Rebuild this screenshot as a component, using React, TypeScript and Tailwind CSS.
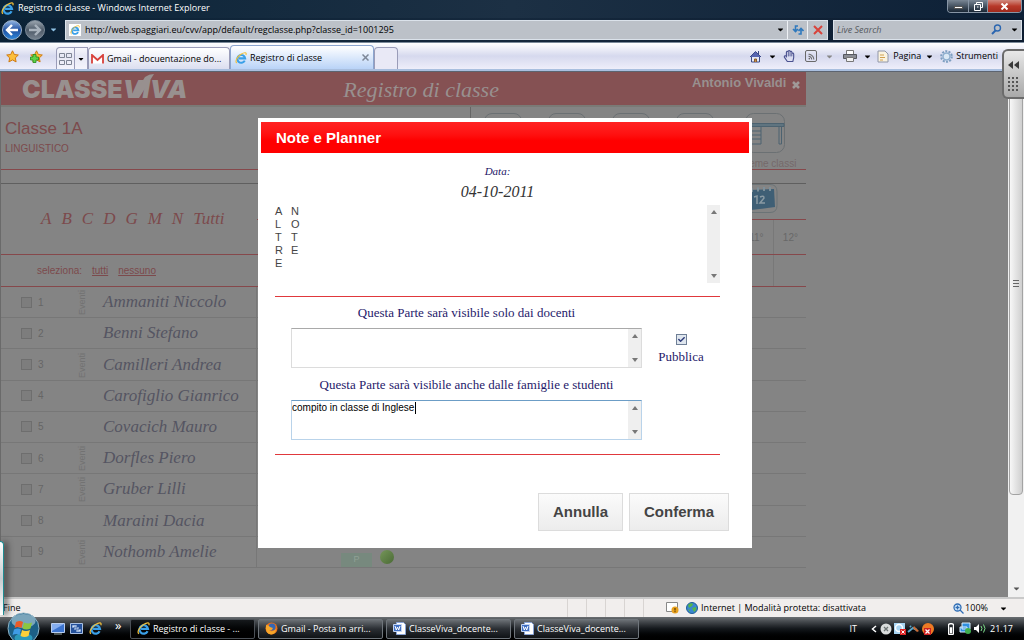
import React from 'react'
import { FaCaretDown, FaRegHandPaper, FaCheck, FaBatteryThreeQuarters } from 'react-icons/fa'
import { MdRssFeed } from 'react-icons/md'

const STUDENTS = [
  { name: 'Ammaniti Niccolo', events: true },
  { name: 'Benni Stefano', events: false },
  { name: 'Camilleri Andrea', events: true },
  { name: 'Carofiglio Gianrico', events: false },
  { name: 'Covacich Mauro', events: false },
  { name: 'Dorfles Piero', events: true },
  { name: 'Gruber Lilli', events: true },
  { name: 'Maraini Dacia', events: false },
  { name: 'Nothomb Amelie', events: true },
]

const LETTERS = ['A', 'B', 'C', 'D', 'G', 'M', 'N', 'Tutti']

const TASKS = [
  { label: 'Registro di classe - ...', icon: <IeIcon size={13} />, active: true },
  { label: 'Gmail - Posta in arri...', icon: <FirefoxIcon />, active: false },
  { label: 'ClasseViva_docente...', icon: <WordIcon />, active: false },
  { label: 'ClasseViva_docente...', icon: <WordIcon />, active: false },
]

function App() {
  return (
    <div className="relative flex h-screen flex-col overflow-hidden bg-[#848484] font-['Segoe_UI','Open_Sans',sans-serif] text-[9px]">
      <TitleBar />
      <AddressBar />
      <TabBar />
      <div className="flex min-h-0 flex-1 border-t border-[#5d6470]">
        <div className="relative min-w-0 flex-1 overflow-hidden">
          <Register />
          <div className="absolute inset-0 flex items-start justify-center pl-0.5 pt-[46px]">
            <NoteDialog />
          </div>
        </div>
        <PageScrollbar />
      </div>
      <StatusBar />
      <Taskbar />
      <SidePanels />
    </div>
  )
}

/* ---------- browser ---------- */

function TitleBar() {
  return (
    <div className="flex h-[18px] shrink-0 items-start justify-between bg-linear-to-r from-[#0b2438] via-[#1c3044] to-[#0d2036] pl-px pr-0.5">
      <div className="flex items-center gap-1 pt-px text-white">
        <IeIcon size={13} />
        <span className="text-[9px] leading-[14px]">Registro di classe - Windows Internet Explorer</span>
      </div>
      <div className="flex h-[13px] overflow-hidden rounded-b border border-t-0 border-[#8795a5] text-white">
        <button aria-label="Riduci a icona" className="flex w-[21px] items-end justify-center border-r border-[#8795a5] bg-linear-to-b from-[#7a8795] to-[#1a2735] pb-[3px]">
          <span className="h-[3px] w-[9px] border border-[#555] bg-white" />
        </button>
        <button aria-label="Ripristina" className="flex w-[19px] items-center justify-center border-r border-[#8795a5] bg-linear-to-b from-[#7a8795] to-[#1a2735]">
          <svg width="9" height="9" viewBox="0 0 9 9" fill="none" stroke="white">
            <path d="M2.500 2.500V.5h6v5h-2M.5 2.500h6v6h-6zM3 5h1.500" />
          </svg>
        </button>
        <button aria-label="Chiudi" className="flex w-[33px] items-center justify-center bg-linear-to-b from-[#d08a80] via-[#b8392a] to-[#a02a1c]">
          <svg width="9" height="7" viewBox="0 0 9 7" stroke="white" strokeWidth="2">
            <path d="M1.500.5l6 6M7.500.5l-6 6" />
          </svg>
        </button>
      </div>
    </div>
  )
}

function AddressBar() {
  return (
    <div className="flex h-[25px] shrink-0 items-center border-b border-[#7b8a9a] bg-linear-to-r from-[#0b2236] via-[#15283c] to-[#0c1c30] pb-px pl-0.5 pr-0.5">
      <button aria-label="Indietro" className="flex size-[20px] items-center justify-center rounded-full border border-[#9fb4cc] bg-linear-to-b from-[#8fb2e0] via-[#1f4fa0] to-[#2e86d8]">
        <svg width="14" height="12" viewBox="0 0 14 12" fill="none" stroke="white" strokeWidth="2.400"><path d="M7 1L2 6l5 5M2 6h11" /></svg>
      </button>
      <button aria-label="Avanti" className="ml-[3px] flex size-[20px] items-center justify-center rounded-full border border-[#7d8b99] bg-linear-to-b from-[#9aa4ae] via-[#4d5a68] to-[#76828e]">
        <svg width="14" height="12" viewBox="0 0 14 12" fill="none" stroke="#a9b3bd" strokeWidth="2.400"><path d="M7 1l5 5-5 5M12 6H1" /></svg>
      </button>
      <FaCaretDown className="ml-1 size-[9px] text-[#8fc3e6]" />
      <div className="ml-[7px] flex h-[20px] flex-1 items-center border border-[#dbe2ea] bg-[#bcc1c8]">
        <span className="ml-[3px] flex size-[12px] items-center justify-center bg-white"><IeIcon size={10} /></span>
        <input aria-label="Indirizzo" defaultValue="http://web.spaggiari.eu/cvv/app/default/regclasse.php?classe_id=1001295" className="ml-1 min-w-0 flex-1 bg-transparent text-[9px] text-black outline-none" />
        <FaCaretDown className="mr-0.5 size-[9px] text-black" />
        <button aria-label="Aggiorna" className="flex h-full w-[20px] items-center justify-center border-l border-[#eef1f5]">
          <svg width="12" height="12" viewBox="0 0 12 12" fill="none" stroke="#2f79bd" strokeWidth="1.600"><path d="M6 2H3.500v5M1 5l2.500 2.500L6 5M6.500 10H9V5M6.500 7L9 4.500 11.500 7" /></svg>
        </button>
        <button aria-label="Interrompi" className="flex h-full w-[20px] items-center justify-center border-l border-[#eef1f5]">
          <svg width="10" height="10" viewBox="0 0 10 10" stroke="#d8433b" strokeWidth="2"><path d="M1 1l8 8M9 1L1 9" /></svg>
        </button>
      </div>
      <div className="ml-[5px] flex h-[20px] w-[189px] items-center border border-[#dbe2ea] bg-[#bcc1c8]">
        <input aria-label="Cerca" placeholder="Live Search" className="ml-[3px] min-w-0 flex-1 bg-transparent text-[9px] italic outline-none placeholder:text-[#55595f]" />
        <svg width="11" height="11" viewBox="0 0 11 11" fill="none" stroke="#2b66b0" strokeWidth="1.400"><circle cx="6.500" cy="4" r="3" /><path d="M4.500 6.500L1 10" strokeWidth="2" /></svg>
        <FaCaretDown className="ml-2 mr-0.5 size-[9px] text-black" />
      </div>
    </div>
  )
}

function TabBar() {
  return (
    <div className="flex h-[28px] shrink-0 items-center justify-between border-b-2 border-[#a9bfdf] bg-linear-to-b from-white via-[#d6d9ee] to-[#eeeefa] text-black">
      <div className="flex h-full items-end">
        <div className="flex h-full items-center gap-[11px] pl-[6px] pr-[13px]">
          <StarIcon />
          <StarIcon plus />
        </div>
        <div className="flex h-[22px] items-center rounded-tl border border-[#9a9cb8] border-b-0 bg-white/40">
          <button aria-label="Schede rapide" className="flex h-full w-[18px] items-center justify-center border-r border-[#9a9cb8]">
            <svg width="13" height="12" viewBox="0 0 13 12" fill="none" stroke="#7e8594"><path d="M.5.5h5v4h-5zM7.500.5h5v4h-5zM.5 7.500h5v4h-5zM7.500 7.500h5v4h-5z" /></svg>
          </button>
          <button aria-label="Elenco schede" className="flex w-[12px] justify-center"><FaCaretDown className="size-[8px]" /></button>
        </div>
        <button className="flex h-[22px] w-[142px] items-center gap-[3px] rounded-t border border-b-0 border-[#9a9cb8] bg-linear-to-b from-white to-[#dcdff0] pl-[2px]">
          <svg width="13" height="10" viewBox="0 0 13 10" fill="white" stroke="#d8403a" strokeWidth="1.800"><path d="M1 9.500V1l5.500 5L12 1v8.500" /></svg>
          <span>Gmail - docuentazione do...</span>
        </button>
        <div className="flex h-[24px] w-[144px] items-center gap-[3px] rounded-t border border-b-0 border-[#8ba5cf] bg-linear-to-b from-white to-[#b9d3f7] pl-[4px] pr-[4px]">
          <IeIcon size={12} />
          <span className="flex-1">Registro di classe</span>
          <button aria-label="Chiudi scheda">
            <svg width="7" height="7" viewBox="0 0 7 7" stroke="#7d8797" strokeWidth="1.500"><path d="M.5.5l6 6M6.500.5l-6 6" /></svg>
          </button>
        </div>
        <button aria-label="Nuova scheda" className="h-[22px] w-[24px] rounded-t border border-b-0 border-[#9a9cb8] bg-[#e9e9f6]" />
      </div>
      <div className="flex items-center pr-[26px]">
        <svg width="13" height="13" viewBox="0 0 13 13" fill="#e4e8f4" stroke="#3c4a86"><path d="M2.500 6v6h8V6" /><path d="M1 7l5.500-5.500L12 7" fill="#5564b0" /><path d="M9.500 1v3" /><path d="M5.500 12V9h2v3" fill="#c08a4a" stroke="#8a5a2a" /></svg>
        <FaCaretDown className="ml-[6px] size-[9px]" />
        <FaRegHandPaper className="ml-[6px] size-[12px] text-[#4b5290]" />
        <span className="ml-[10px] flex size-[12px] items-center justify-center rounded-xs border border-[#6a6a6a] text-[#6a6a6a]"><MdRssFeed className="size-[9px]" /></span>
        <FaCaretDown className="ml-[8px] size-[9px] text-[#888]" />
        <PrinterIcon />
        <FaCaretDown className="ml-[6px] size-[9px]" />
        <svg className="ml-[5px]" width="12" height="13" viewBox="0 0 12 13" fill="#fbf3df" stroke="#9096a8"><path d="M1 1h7l3 3v8H1z" /><path d="M3 5h4M3 7.500h5M3 10h3" stroke="#d0a050" /></svg>
        <button className="ml-[4px] flex items-center gap-[4px]">Pagina <FaCaretDown className="size-[9px]" /></button>
        <GearIcon />
        <button className="ml-[3px]">Strumenti</button>
      </div>
    </div>
  )
}

function PageScrollbar() {
  return (
    <div className="flex w-[16px] shrink-0 flex-col items-center justify-between bg-[#f1f1f1]">
      <div className="flex h-[423px] w-[14px] items-center justify-center rounded-b-sm border border-[#a3a3a3] bg-linear-to-r from-[#f7f7f7] to-[#cfcfcf]">
        <span className="h-[7px] w-[6px] border-y border-[#666]"><span className="mt-[2px] block h-px bg-[#666]" /></span>
      </div>
      <FaCaretDown className="mb-1 size-[9px] text-[#555]" />
    </div>
  )
}

function StatusBar() {
  return (
    <div className="flex h-[20px] shrink-0 items-center justify-between border-t-2 border-[#c9c9c9] bg-[#f1eeed] text-black">
      <span className="pl-[3px]">Fine</span>
      <div className="flex h-full items-center">
        {[0, 1, 2, 3, 4].map((i) => (
          <span key={i} className="mr-[18px] h-full w-px bg-[#d8d4d2]" />
        ))}
        <svg className="ml-1" width="13" height="12" viewBox="0 0 13 12"><path d="M.5.5h11v9H.5z" fill="white" stroke="#888" /><circle cx="9" cy="8" r="3.500" fill="#e9a21f" /><path d="M9 6v2.500M9 9.200v1" stroke="#3a2500" /></svg>
        <GlobeIcon />
        <span className="ml-[3px] w-[252px]">Internet | Modalità protetta: disattivata</span>
        <svg width="11" height="11" viewBox="0 0 11 11" fill="none" stroke="#2f6db5" strokeWidth="1.300"><circle cx="4.500" cy="4.500" r="3.500" fill="#d8ebfb" /><path d="M2.500 4.500h4M4.500 2.500v4M7 7l3.500 3.500" /></svg>
        <button className="ml-px flex items-center gap-[11px] pr-[16px]">100% <FaCaretDown className="size-[9px]" /></button>
      </div>
    </div>
  )
}

function Taskbar() {
  return (
    <div className="flex h-[23px] shrink-0 items-center justify-between bg-linear-to-b from-[#6a6e72] via-[#15191d] to-black pr-[11px] text-white">
      <div className="flex items-center">
        <button aria-label="Start" className="relative z-10 ml-[7px] -my-2 size-[33px]"><StartOrb /></button>
        <DesktopIcon />
        <SwitchIcon />
        <span className="ml-[6px]"><IeIcon size={13} /></span>
        <span className="ml-[13px] mb-2 w-[15px] text-[13px] leading-[10px]">»</span>
        <div className="flex gap-[3px]">
          {TASKS.map((task, i) => (
            <TaskButton key={i} task={task} />
          ))}
        </div>
      </div>
      <div className="flex items-center">
        <span className="mr-[14px]">IT</span>
        <svg width="6" height="8" viewBox="0 0 6 8" fill="none" stroke="white" strokeWidth="1.500"><path d="M5 1L1.500 4 5 7" /></svg>
        <svg className="ml-[3px]" width="56" height="14" viewBox="0 0 56 14">
          <circle cx="6" cy="7" r="5.500" fill="#d9dcdc" /><path d="M4 5l4 4M8 5L4 9" stroke="#6d7474" strokeWidth="1.300" />
          <path d="M14 1h11v11H14z" fill="#a7d4f2" /><circle cx="19" cy="6" r="3.500" fill="none" stroke="white" strokeWidth="1.500" /><path d="M20 7h6v6h-6z" fill="#d22" /><path d="M21.500 8.500l3 3M24.500 8.500l-3 3" stroke="white" />
          <path d="M28 10l5-4 4 2M30 4l1 1" stroke="#58a5c9" strokeWidth="2" /><path d="M34 4l5 5-2 1-4-4z" fill="#c76a35" />
          <circle cx="48" cy="7" r="6" fill="#ee7a24" /><path d="M44 6h7v7h-7z" fill="#cf2020" /><path d="M45.500 7.500l4 4M49.500 7.500l-4 4" stroke="white" strokeWidth="1.300" />
        </svg>
        <FaBatteryThreeQuarters className="ml-[9px] size-[12px] -rotate-90" />
        <svg className="ml-[2px]" width="28" height="13" viewBox="0 0 28 13">
          <path d="M3 1h8v6H3zM1 5h7v5H1z" fill="#2f8fe0" stroke="#dcefff" /><circle cx="9" cy="9" r="3" fill="#3fae4f" />
          <path d="M15 5h2l3-3v9l-3-3h-2z" fill="white" /><path d="M22 4q2 2.500 0 5M24.500 2.500q3 4 0 8" fill="none" stroke="#7fe08a" />
        </svg>
        <span className="ml-[3px]">21.17</span>
      </div>
    </div>
  )
}

function TaskButton({ task }: any) {
  return (
    <button className={task.active
      ? 'flex h-[20px] w-[125px] items-center gap-[3px] rounded-xs border border-[#4b5056] bg-linear-to-b from-[#16191c] to-black px-[6px]'
      : 'flex h-[20px] w-[125px] items-center gap-[3px] rounded-xs border border-[#6f757b] bg-linear-to-b from-[#6b7075] via-[#2a2e33] to-[#101316] px-[6px]'}>
      {task.icon}
      <span className="whitespace-nowrap">{task.label}</span>
    </button>
  )
}

/* Docked gadgets that sit over the window edges */
function SidePanels() {
  return (
    <>
      <div className="absolute right-0 top-[49px] flex h-[50px] w-[22px] flex-col items-center gap-[8px] rounded-l-md border-2 border-r-0 border-[#6b6b6b] bg-linear-to-b from-[#e8e8e8] to-[#a9a9a9] pt-[10px]">
        <svg width="12" height="8" viewBox="0 0 12 8" fill="#3a3a3a"><path d="M5 0v8L0 4zM11 0v8L6 4z" /></svg>
        <svg width="12" height="15" viewBox="0 0 12 15" stroke="#555" strokeWidth="2" strokeDasharray="2 2"><path d="M0 1h12M0 5h12M0 9h12M0 13h12" /></svg>
      </div>
      <div className="absolute bottom-[25px] left-0 h-[74px] w-[4px] rounded-tr border-r border-t border-[#1f8d93] bg-linear-to-b from-white via-[#c7cccf] to-white shadow-[3px_0_6px_#333]" />
    </>
  )
}

/* ---------- page ---------- */

function Register() {
  return (
    <div className="h-full w-4/5 border-l border-[#6a6a6a] font-['Arial','Liberation_Sans',sans-serif] text-[#7c4a4c]">
      <header className="flex h-[35px] items-center border-b-2 border-[#7a7a76] bg-[#855153] text-[#98908f]">
        <Logo />
        <h1 className="ml-[156px] flex-1 pt-px font-['Monotype_Corsiva','Liberation_Serif',serif] text-[22px] italic">Registro di classe</h1>
        <span className="mb-3 text-[13px] font-bold">Antonio Vivaldi</span>
        <button aria-label="Esci" className="mb-2 ml-[6px] mr-[6px]">
          <svg width="8" height="8" viewBox="0 0 8 8" stroke="#a09a99" strokeWidth="2.500"><path d="M1 1l6 6M7 1L1 7" /></svg>
        </button>
      </header>

      <div className="flex h-[63px] items-stretch justify-between border-b border-[#86484b]">
        <div className="pl-[4px] pt-[12px]">
          <h2 className="text-[17px] leading-[20px]">Classe 1A</h2>
          <p className="pt-[2px] text-[10px] leading-[16px]">LINGUISTICO</p>
        </div>
        <div className="flex items-start gap-[20px] border-l border-[#666] pl-[13px] pr-[10px] pt-[6px]">
          <div className="flex gap-[26px]">
            {[0, 1, 2, 3].map((i) => (
              <span key={i} className="size-[38px] rounded-lg border border-[#6b7073]" />
            ))}
          </div>
          <div className="flex flex-col items-center">
            <DeskIcon />
            <span className="mt-[3px] text-[10px] text-[#75696a]">Insieme classi</span>
          </div>
        </div>
      </div>

      <div className="mt-[13px] flex h-[72px] border-y border-t-[#5f5f5f] border-b-[#86484b]">
        <nav className="flex w-[256px] items-center gap-[10px] pl-[40px] font-['Monotype_Corsiva','Liberation_Serif',serif] text-[17px] italic">
          {LETTERS.map((letter) => (
            <a key={letter} href="#">{letter}</a>
          ))}
        </nav>
        <div className="flex flex-1 flex-col">
          <div className="flex h-[36px] justify-end border-b border-[#86484b] pr-[28px]"><CalendarIcon /></div>
          <div className="flex flex-1 items-center justify-end text-[10px] text-[#686868]">
            <span className="w-[34px] text-center">11°</span>
            <span className="flex h-full w-[33px] items-center justify-center border-l border-[#787878]">12°</span>
          </div>
        </div>
      </div>

      <div className="flex h-[32px] items-center justify-between border-b border-[#86484b]">
        <div className="flex gap-[10px] pl-[36px] text-[10px]">
          <span>seleziona:</span>
          <a href="#" className="underline">tutti</a>
          <a href="#" className="underline">nessuno</a>
        </div>
        <span className="mr-[32px] h-full w-px bg-[#787878]" />
      </div>

      <table className="h-[281px] w-full border-separate border-spacing-0 text-[#666]">
        <tbody>
          {STUDENTS.map((student, i) => (
            <StudentRow key={student.name} student={student} index={i + 1} />
          ))}
        </tbody>
      </table>
    </div>
  )
}

function StudentRow({ student, index }: any) {
  return (
    <tr className="h-[31px]">
      <td className="w-[74px] border-b border-[#777] p-0 pl-[20px]">
        <label className="flex items-center gap-[6px] text-[10px]">
          <input type="checkbox" className="size-[11px] appearance-none border border-[#6e6e6e] bg-[#7d7d7d]" />
          {index}
        </label>
      </td>
      <td className="w-[28px] border-b border-[#777] p-0">
        {student.events && <span className="block h-[26px] rotate-180 text-[9px] leading-[14px] text-[#727272] [writing-mode:vertical-rl]">Eventi</span>}
      </td>
      <td className="w-[154px] whitespace-nowrap border-b border-r border-[#777] p-0 font-['Monotype_Corsiva','Liberation_Serif',serif] text-[17px] leading-[20px] italic text-[#555562]">{student.name}</td>
      <td className="border-b border-[#777] p-0 align-bottom">
        {index === 9 && (
          <div className="flex items-end gap-[8px] pl-[84px]">
            <span className="flex h-[14px] w-[31px] items-center justify-center bg-[#77897e] text-[9px] text-[#8fa095]">P</span>
            <span className="mb-[3px] size-[14px] rounded-full bg-linear-to-br from-[#76965a] to-[#4a6b35]" />
          </div>
        )}
      </td>
    </tr>
  )
}

function Logo() {
  return (
    <div className="relative ml-[21px] font-['Inter',sans-serif] text-[25px] font-black leading-[38px]">
      CLASSE<span className="italic">VIVA</span>
      <svg className="absolute left-[104px] top-[4px]" width="30" height="25" viewBox="0 0 30 25" fill="#98908f"><path d="M6 24L19 3q4-3 9-3L13 24z" /></svg>
    </div>
  )
}

/* ---------- dialog ---------- */

function NoteDialog() {
  return (
    <div role="dialog" aria-labelledby="dialog-title" className="w-[494px] bg-white px-[3px] pb-[17px] pt-[4px] font-['Arial','Liberation_Sans',sans-serif]">
      <h2 id="dialog-title" className="h-[31px] bg-linear-to-b from-[#ff2222] to-[#ff0000] to-60% pl-[15px] text-[15px] font-bold leading-[32px] text-white">Note e Planner</h2>
      <form className="pl-[14px] pr-[29px] pt-[10px]">
        <div className="flex flex-col items-center font-['Monotype_Corsiva','Liberation_Serif',serif] italic">
          <p className="text-[11px] leading-[16px] text-[#1a1466]">Data:</p>
          <p className="pt-[3px] text-[16px] leading-[20px] text-[#333]">04-10-2011</p>
        </div>

        <div className="mt-[3px] flex h-[78px] justify-between text-[11px] leading-[13px] text-[#444]">
          <div className="flex gap-[8px]">
            <VerticalWord word="ALTRE" />
            <VerticalWord word="NOTE" />
          </div>
          <Scroller />
        </div>

        <div className="mt-[13px] flex border-y border-[#e0383c] pb-[14px] pl-[16px] pt-[6px] font-['Book_Antiqua','Liberation_Serif',serif] text-[13px] leading-[20px] text-[#1f1a6b]">
          <div className="flex-1">
            <label htmlFor="teachers" className="block text-center">Questa Parte sarà visibile solo dai docenti</label>
            <div className="mt-[5px] flex h-[40px] border border-[#dcdcdc] border-t-[#a9a9a9]">
              <textarea id="teachers" className="min-w-0 flex-1 resize-none outline-none" />
              <Scroller />
            </div>
            <label htmlFor="families" className="mt-[7px] block text-center">Questa Parte sarà visibile anche dalle famiglie e studenti</label>
            <div className="relative mt-[5px] flex h-[40px] border border-[#b9d3ea] border-t-[#6c9dc6]">
              <textarea id="families" defaultValue="compito in classe di Inglese" className="min-w-0 flex-1 resize-none font-['Arial','Liberation_Sans',sans-serif] text-[10px] leading-[14px] text-black outline-none" />
              <span className="absolute left-[123px] top-px h-[12px] w-px bg-black" />
              <Scroller />
            </div>
          </div>
          <label className="flex w-[78px] flex-col items-center pt-[31px]">
            <span className="relative flex size-[11px]">
              <input type="checkbox" defaultChecked className="size-full appearance-none border border-[#6f7f96] bg-[#dfe6ee]" />
              <FaCheck className="absolute left-[2px] top-[2px] size-[7px] text-[#2c3a78]" />
            </span>
            <span className="pt-[2px]">Pubblica</span>
          </label>
        </div>

        <div className="-mr-[9px] mt-[38px] flex justify-end gap-[6px] text-[15px] font-bold text-[#444]">
          <button type="button" className="h-[38px] border border-[#dcdcdc] bg-linear-to-b from-[#fbfbfb] to-[#ececec] px-[14px]">Annulla</button>
          <button type="button" className="h-[38px] border border-[#dcdcdc] bg-linear-to-b from-[#fbfbfb] to-[#ececec] px-[14px]">Conferma</button>
        </div>
      </form>
    </div>
  )
}

function VerticalWord({ word }: any) {
  return (
    <div className="flex w-[8px] flex-col">
      {word.split('').map((letter: string, i: number) => (
        <span key={i}>{letter}</span>
      ))}
    </div>
  )
}

function Scroller() {
  return (
    <div className="flex w-[13px] flex-col items-center justify-between bg-[#efefef] py-[5px]">
      <svg width="6" height="4" viewBox="0 0 6 4" fill="#777"><path d="M3 0l3 4H0z" /></svg>
      <svg width="6" height="4" viewBox="0 0 6 4" fill="#777"><path d="M0 0h6L3 4z" /></svg>
    </div>
  )
}

/* ---------- icons ---------- */

function IeIcon({ size }: any) {
  return (
    <svg width={size} height={size} viewBox="0 0 16 16" fill="none" className="shrink-0">
      <path d="M13 11.500A5.200 5.200 0 1 1 13.500 8.500H5" stroke="#3aa0e8" strokeWidth="2.800" />
      <path d="M2.500 14.500C-.5 13 3 6 8 3s8-2.500 6.500 1" stroke="#f3c13a" strokeWidth="1.500" />
    </svg>
  )
}

function StarIcon({ plus }: any) {
  return (
    <svg width="13" height="13" viewBox="0 0 13 13">
      <path d="M6.500.8l1.800 3.700 4 .5-3 2.900.8 4-3.600-2-3.600 2 .8-4-3-2.900 4-.5z" fill="#fcbf3b" stroke="#d07a12" />
      {plus && <path d="M3 4.500h3v2.500h2.500v3H6v2.500H3V10H.5V7H3z" fill="#5fd34a" stroke="#238a1c" strokeWidth=".8" />}
    </svg>
  )
}

function PrinterIcon() {
  return (
    <svg className="ml-[9px]" width="14" height="12" viewBox="0 0 14 12">
      <path d="M3.500.5h7v4h-7z" fill="white" stroke="#777" />
      <path d="M.5 4.500h13v4H.5z" fill="#8a8d94" stroke="#55585f" />
      <path d="M3.500 7.500h7v4h-7z" fill="#f2f2f2" stroke="#777" />
    </svg>
  )
}

function GearIcon() {
  return (
    <svg className="ml-[6px]" width="13" height="13" viewBox="0 0 13 13" fill="none">
      <circle cx="6.500" cy="6.500" r="5.300" stroke="#7d9ec0" strokeWidth="2" strokeDasharray="2 1.300" />
      <circle cx="6.500" cy="6.500" r="3.500" fill="#dbe9f5" stroke="#8fb0cf" strokeWidth="1.500" />
    </svg>
  )
}

function GlobeIcon() {
  return (
    <svg className="ml-[7px]" width="12" height="12" viewBox="0 0 12 12">
      <circle cx="6" cy="6" r="5.500" fill="#3a86d0" stroke="#1f5d96" />
      <path d="M2 3q3-3 5-1l-1 2-3 2zM6 6l4-1q1 3-2 5zM2 7l2 1v2z" fill="#55b54a" />
    </svg>
  )
}

function StartOrb() {
  return (
    <svg width="33" height="33" viewBox="0 0 33 33">
      <circle cx="16.500" cy="16.500" r="15.500" fill="#1c5f86" stroke="#8fb4c6" />
      <ellipse cx="16.500" cy="9" rx="12" ry="7" fill="#b9d3df" opacity=".6" />
      <ellipse cx="16.500" cy="26" rx="9" ry="5" fill="#36c0dd" opacity=".6" />
      <path d="M9 10q4-2 7 0l-1.500 6q-3-2-7 0z" fill="#ea5b28" />
      <path d="M17 10.500q4 2 8 0l-1.500 6q-4 2-8 0z" fill="#8cc63e" />
      <path d="M7 17.500q4-2 7 0L12.500 23q-3-2-7 0z" fill="#3f9be6" />
      <path d="M15 18q4 2 8 0l-1.500 6q-4 2-8 0z" fill="#fbd039" />
    </svg>
  )
}

function DesktopIcon() {
  return (
    <svg className="ml-[11px]" width="14" height="12" viewBox="0 0 14 12">
      <path d="M.5.5h13v9H.5z" fill="#3c74cf" stroke="#b9cdee" /><path d="M1 1h12L1 8z" fill="#86aef0" /><path d="M3 11h8" stroke="#9aa" />
    </svg>
  )
}

function SwitchIcon() {
  return (
    <svg className="ml-[5px]" width="13" height="12" viewBox="0 0 13 12">
      <path d="M.5.5h12v10H.5z" fill="#25529c" stroke="#a9c0e2" /><path d="M2 2h5v3H2zM4 4h5v3H4zM6 6h5v3H6z" fill="#cfe1fa" stroke="#25529c" strokeWidth=".6" />
    </svg>
  )
}

function FirefoxIcon() {
  return (
    <svg width="13" height="13" viewBox="0 0 13 13" className="shrink-0">
      <circle cx="6.500" cy="6.500" r="6" fill="#e8701a" /><circle cx="7" cy="5" r="3.500" fill="#3566b4" />
      <path d="M1 3q3 0 4 2l3 1q-1 3-4 2 3 3 7-1 0 5-5 5.500Q0 12 1 3z" fill="#f6a62a" />
    </svg>
  )
}

function WordIcon() {
  return (
    <svg width="13" height="13" viewBox="0 0 13 13" className="shrink-0">
      <path d="M3.500.5h7l2 2v10h-9z" fill="white" stroke="#8aa4d6" /><path d="M.5 2.500h8v7h-8z" fill="#3f6fc4" stroke="#c4d5f3" /><path d="M2 4l1.300 4L4.500 5l1.200 3L7 4" fill="none" stroke="white" />
    </svg>
  )
}

function DeskIcon() {
  return (
    <svg width="40" height="40" viewBox="0 0 40 40" fill="none" stroke="#4c6270">
      <rect x=".5" y=".5" width="39" height="39" rx="8" stroke="#6b7073" />
      <path d="M1 10.500h38v3H1z" fill="#5f7480" />
      <path d="M4 14v17h12V14M4 18h12M4 22h12M4 26h12M34 14v17h2.500V14" />
    </svg>
  )
}

function CalendarIcon() {
  return (
    <svg width="34" height="30" viewBox="0 0 34 30">
      <path d="M0 .5h26q7 0 7 7v14q0 7-7 7H0" fill="none" stroke="#6b7376" />
      <path d="M4 6l26-1 1 18-24 3z" fill="#3f5f75" />
      <path d="M8 4v4M14 3.500v4M20 3v4M26 3v4" stroke="#7d8f99" strokeWidth="2" />
      <path d="M10 13l3-1v8M16 13q4-2 4 1l-4 5h5" fill="none" stroke="#8a9aa3" strokeWidth="1.500" />
    </svg>
  )
}

export default App
